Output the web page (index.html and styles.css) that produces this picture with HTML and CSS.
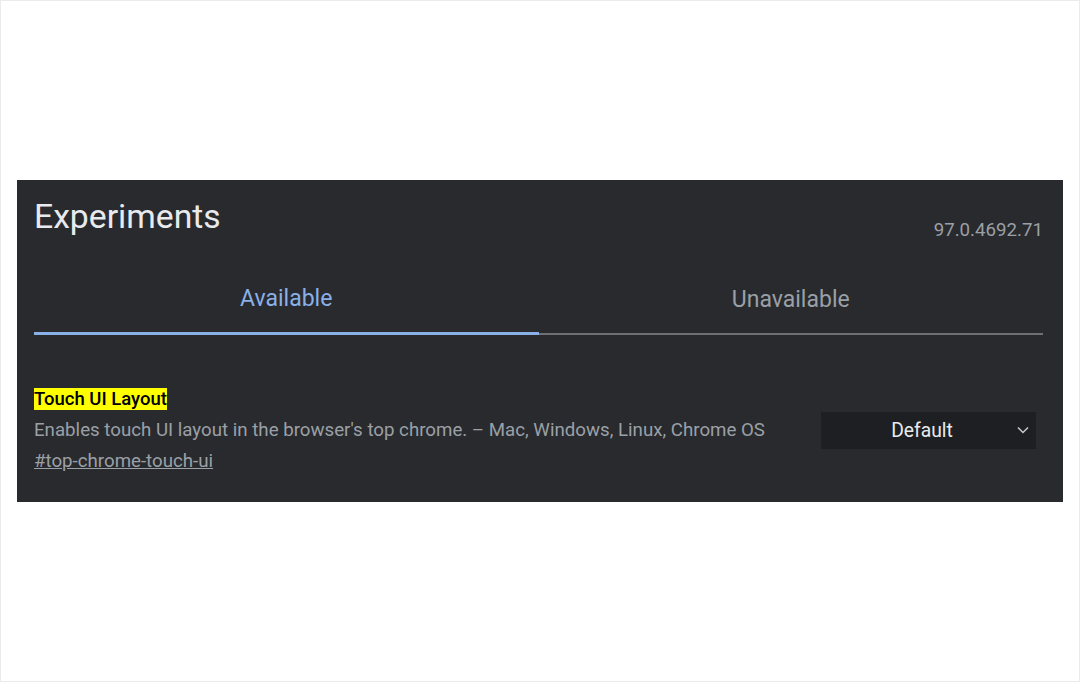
FILE: index.html
```html
<!DOCTYPE html>
<html>
<head>
<meta charset="utf-8">
<link rel="stylesheet" href="styles.css">
</head>
<body>
<div class="frame">
  <div class="panel">
    <div class="header">
      <h1 class="title">Experiments</h1>
      <span class="version">97.0.4692.71</span>
    </div>
    <div class="tabs">
      <div class="tab tab-active">Available</div>
      <div class="tab">Unavailable</div>
    </div>
    <div class="flag">
      <div class="flag-info">
        <div class="flag-name"><span class="highlight">Touch UI Layout</span></div>
        <p class="flag-desc">Enables touch UI layout in the browser's top chrome. – Mac, Windows, Linux, Chrome OS</p>
        <a class="flag-link">#top-chrome-touch-ui</a>
      </div>
      <div class="select">
        <span class="select-label">Default</span>
        <svg class="chevron" width="12" height="8" viewBox="0 0 12 8"><path d="M1 1.5 L6 6.5 L11 1.5" fill="none" stroke="#c8cacd" stroke-width="1.5"/></svg>
      </div>
    </div>
  </div>
</div>
</body>
</html>
```

FILE: styles.css
```css
* { box-sizing: border-box; }
html, body { margin: 0; padding: 0; background: #ffffff; }
body { font-family: Roboto, "Liberation Sans", sans-serif; }
.frame {
  width: 1080px;
  height: 682px;
  border: 1px solid #ebebeb;
  padding-top: 179px;
  padding-left: 16px;
}
.panel {
  width: 1046px;
  height: 322px;
  background: #292a2e;
  padding: 0 20px 0 17px;
}
.header {
  display: flex;
  justify-content: space-between;
  align-items: flex-start;
  height: 72px;
}
.title {
  margin: 0;
  padding-top: 17px;
  font-size: 33.7px;
  font-weight: 400;
  color: #e8eaed;
  line-height: 40px;
}
.version {
  padding-top: 38px;
  font-size: 18.7px;
  color: #9aa0a6;
  line-height: 24px;
}
.tabs {
  display: flex;
  width: 1009px;
  border-bottom: 2px solid #6e7074;
  height: 83px;
}
.tab {
  flex: 1;
  text-align: center;
  font-size: 23px;
  color: #9aa0a6;
  padding-top: 34px;
  line-height: 28px;
}
.tab-active {
  color: #8ab0e8;
  border-bottom: 3px solid #8ab0e8;
  margin-bottom: -2px;
  padding-top: 33px;
}
.flag {
  display: flex;
  justify-content: space-between;
  align-items: center;
  padding-top: 53px;
  padding-right: 7px;
}
.flag-info { display: flex; flex-direction: column; }
.flag-name { line-height: 22px; }
.highlight {
  background: #ffff00;
  color: #000000;
  font-size: 18.5px;
  font-weight: 500;
}
.flag-desc {
  margin: 5px 0 0;
  font-size: 18.7px;
  color: #9aa0a6;
  line-height: 28px;
}
.flag-link {
  font-size: 18.7px;
  color: #9aa0a6;
  text-decoration: underline;
  line-height: 34px;
}
.select {
  width: 215px;
  height: 37px;
  background: #1e1f22;
  display: flex;
  align-items: center;
  margin-top: -6px;
}
.select-label {
  flex: 1;
  text-align: center;
  font-size: 19.3px;
  color: #e8eaed;
  padding-left: 6px;
  padding-top: 1px;
}
.chevron { margin-right: 7px; }
```
